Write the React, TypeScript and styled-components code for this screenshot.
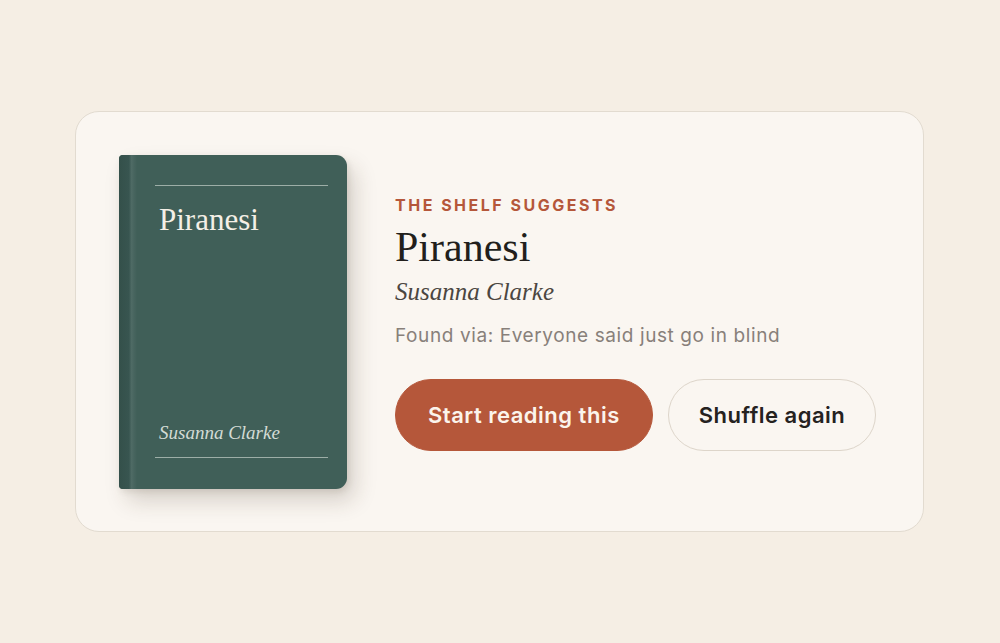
import React from 'react';
import styled, { createGlobalStyle } from 'styled-components';

const Global = createGlobalStyle`
  html, body {
    margin: 0;
    padding: 0;
    background: #f5eee4;
  }
  body {
    font-family: Inter, "Open Sans", sans-serif;
  }
`;

const Page = styled.div`
  width: 1000px;
  height: 643px;
  display: flex;
  align-items: center;
  justify-content: center;
`;

const Card = styled.div`
  width: 849px;
  height: 421px;
  margin-left: -1px;
  box-sizing: border-box;
  background: #faf6f1;
  border: 1px solid #e2dbd0;
  border-radius: 24px;
  padding: 43px;
  display: flex;
  align-items: center;
  gap: 48px;
`;

const Book = styled.div`
  position: relative;
  flex: 0 0 228px;
  height: 334px;
  box-sizing: border-box;
  background: #405f58;
  border-radius: 4px 11px 11px 4px;
  box-shadow: 8px 12px 22px rgba(60, 45, 30, 0.18), 2px 3px 6px rgba(60, 45, 30, 0.1);
  padding: 30px 19px 31px 36px;
  display: flex;
  flex-direction: column;
  overflow: hidden;

  &::before {
    content: '';
    position: absolute;
    left: 0;
    top: 0;
    bottom: 0;
    width: 18px;
    background: linear-gradient(
      to right,
      #34504a 0%,
      #385550 55%,
      #4f6b65 70%,
      #496660 80%,
      #405f58 100%
    );
  }
`;

const Rule = styled.div`
  height: 1px;
  background: rgba(220, 226, 220, 0.6);
`;

const CoverTitle = styled.div`
  margin-top: 16px;
  padding-left: 4px;
  font-family: "Liberation Serif", "DejaVu Serif", serif;
  font-size: 31px;
  color: #f4efe6;
`;

const Spacer = styled.div`
  flex: 1;
`;

const CoverAuthor = styled.div`
  padding-left: 4px;
  margin-bottom: 13px;
  font-family: "Liberation Serif", "DejaVu Serif", serif;
  font-style: italic;
  font-size: 19px;
  color: #d3dbd5;
`;

const Info = styled.div`
  display: flex;
  flex-direction: column;
  padding-top: 3px;
`;

const Eyebrow = styled.div`
  font-size: 16px;
  font-weight: 700;
  letter-spacing: 2.5px;
  color: #b5573a;
  line-height: 18px;
`;

const Title = styled.h1`
  margin: 10px 0 0;
  font-family: "Liberation Serif", "DejaVu Serif", serif;
  font-weight: 400;
  font-size: 42px;
  line-height: 46px;
  color: #221f1c;
`;

const Author = styled.div`
  margin-top: 7px;
  font-family: "Liberation Serif", "DejaVu Serif", serif;
  font-style: italic;
  font-size: 25px;
  line-height: 30px;
  color: #4b4641;
`;

const Found = styled.div`
  margin-top: 17px;
  font-size: 19px;
  letter-spacing: 0.6px;
  line-height: 24px;
  color: #88807a;
`;

const Actions = styled.div`
  display: flex;
  gap: 15px;
  margin-top: 31px;
`;

const Button = styled.button<{ $primary?: boolean }>`
  flex: 0 0 auto;
  height: 72px;
  padding: 0 ${p => (p.$primary ? 32 : 30)}px;
  border-radius: 36px;
  white-space: nowrap;
  font-family: Inter, "Open Sans", sans-serif;
  font-size: 22px;
  font-weight: 600;
  letter-spacing: 0.5px;
  cursor: pointer;
  border: 1px solid ${p => (p.$primary ? '#b5573a' : '#ddd5ca')};
  background: ${p => (p.$primary ? '#b5573a' : '#faf6f1')};
  color: ${p => (p.$primary ? '#fbf4ec' : '#25221f')};
`;

export default function App() {
  return (
    <Page>
      <Global />
      <Card>
        <Book>
          <Rule />
          <CoverTitle>Piranesi</CoverTitle>
          <Spacer />
          <CoverAuthor>Susanna Clarke</CoverAuthor>
          <Rule />
        </Book>
        <Info>
          <Eyebrow>THE SHELF SUGGESTS</Eyebrow>
          <Title>Piranesi</Title>
          <Author>Susanna Clarke</Author>
          <Found>Found via: Everyone said just go in blind</Found>
          <Actions>
            <Button $primary>Start reading this</Button>
            <Button>Shuffle again</Button>
          </Actions>
        </Info>
      </Card>
    </Page>
  );
}
